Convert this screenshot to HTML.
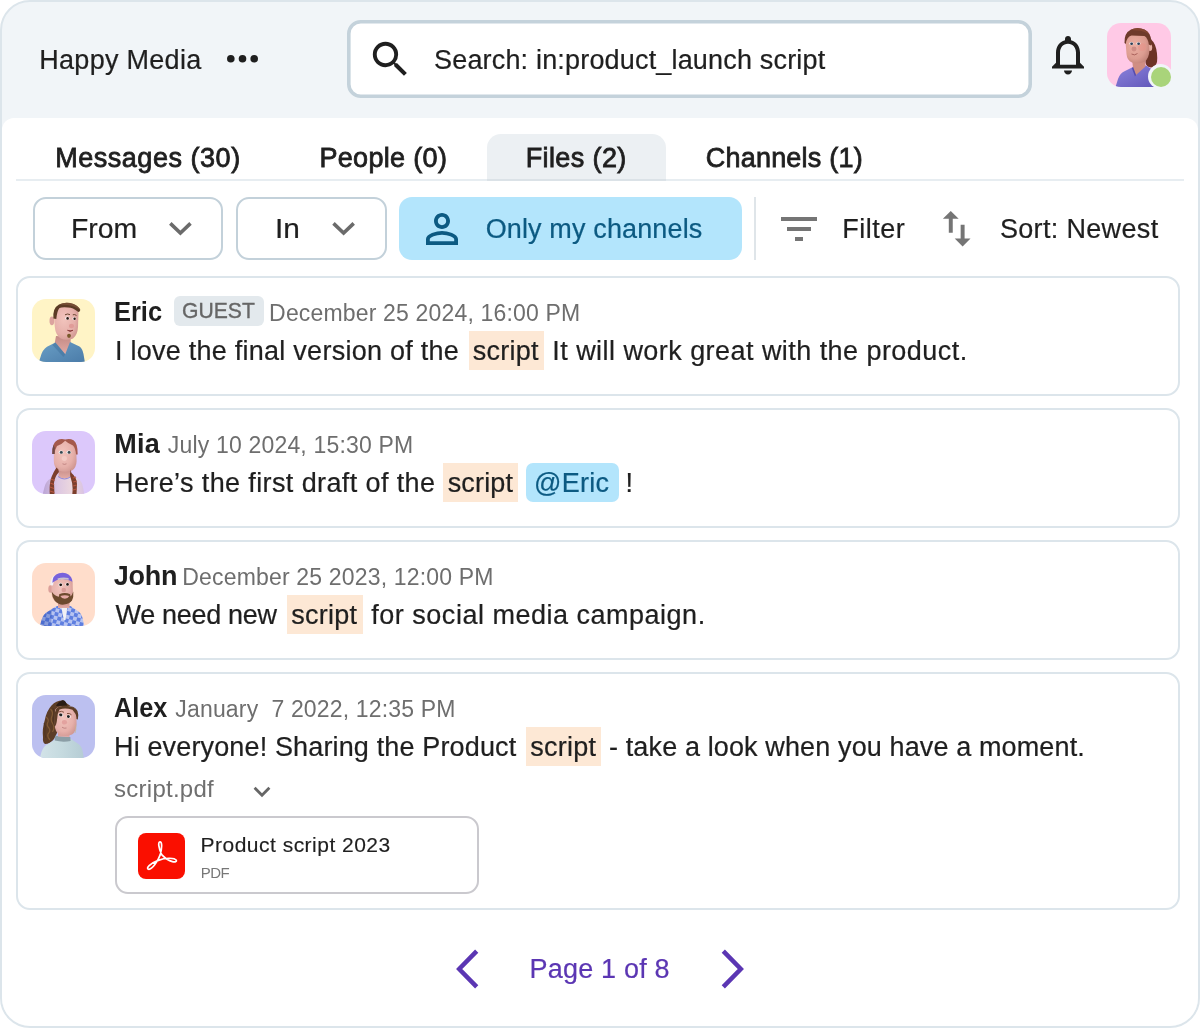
<!DOCTYPE html>
<html lang="en"><head><meta charset="utf-8"><title>Search results</title>
<style>
html,body{margin:0;padding:0;background:#fff;}
body{width:1200px;height:1028px;overflow:hidden;font-family:"Liberation Sans",sans-serif;position:relative;}
#frame{position:absolute;left:0;top:0;width:1200px;height:1028px;box-sizing:border-box;border:2px solid #dce5eb;border-radius:30px;background:#f1f5f8;overflow:hidden;}
#frame>*{position:absolute;}
/* all coordinates below are relative to the frame padding box (offset -2,-2 from page) */
#inner{left:-2px;top:-2px;width:1200px;height:1028px;will-change:transform;}
#inner>*{position:absolute;box-sizing:border-box;}
.t{position:absolute;line-height:1;white-space:pre;}
#panel{left:2px;top:118px;width:1196px;height:910px;background:#fff;border-radius:12px 12px 0 0;}
#search{left:347px;top:19.5px;width:685px;height:78.5px;border:3px solid #c5d3dc;border-radius:13px;background:#fff;}
.card{left:16px;width:1164px;border:2px solid #dce5eb;border-radius:14px;background:#fff;}
.btn{top:197px;height:63px;border:2px solid #c3d1da;border-radius:13px;background:#fff;}
.hl{background:#fde8d5;height:39px;}
.pill{background:#b3e5fc;border-radius:7px;}
.av{width:63px;height:63px;border-radius:14px;overflow:hidden;}
.av svg{display:block;}
svg{position:absolute;overflow:visible;}

</style></head>
<body>
<div id="frame"><div id="inner">
<svg width="0" height="0" style="left:0;top:0"><defs>
<radialGradient id="sk" cx=".4" cy=".4" r=".75"><stop offset="0" stop-color="#f2c4bd"/><stop offset=".6" stop-color="#e6b0aa"/><stop offset="1" stop-color="#c98f8a"/></radialGradient>
<radialGradient id="sk2" cx=".4" cy=".4" r=".75"><stop offset="0" stop-color="#ecb0a3"/><stop offset=".6" stop-color="#dc9c90"/><stop offset="1" stop-color="#b87a70"/></radialGradient>
<linearGradient id="nk" x1="0" y1="0" x2="0" y2="1"><stop offset="0" stop-color="#c48a85"/><stop offset="1" stop-color="#e3aca6"/></linearGradient>
</defs></svg>
<!-- header -->
<svg style="left:0;top:0" width="1200" height="118" viewBox="0 0 1200 118">
  <g fill="#1f1f1f"><circle cx="230.8" cy="58.8" r="3.8"/><circle cx="242.5" cy="58.8" r="3.8"/><circle cx="254.2" cy="58.8" r="3.8"/></g>
</svg>
<svg style="left:340px;top:14px" width="700" height="90" viewBox="340 14 700 90"><rect x="348.800" y="21.800" width="681.400" height="74.400" rx="12" fill="#fff" stroke="#c4d2db" stroke-width="3.600"/></svg>
<svg style="left:366.7px;top:35.7px" width="46.7" height="46.7" viewBox="0 0 24 24"><path fill="#1f1f1f" d="M15.5 14h-.79l-.28-.27A6.471 6.471 0 0 0 16 9.5 6.5 6.5 0 1 0 9.5 16c1.61 0 3.09-.59 4.23-1.57l.27.28v.79l5 4.99L20.49 19l-4.99-5zm-6 0C7.01 14 5 11.99 5 9.5S7.01 5 9.5 5 14 7.01 14 9.5 11.99 14 9.5 14z"/></svg>
<svg style="left:1044px;top:31.1px" width="48" height="47.5" viewBox="0 0 24 24" preserveAspectRatio="none"><path fill="#1f1f1f" d="M12 22c1.1 0 2-.9 2-2h-4c0 1.1.9 2 2 2zm6-6v-5c0-3.07-1.63-5.64-4.5-6.32V4c0-.83-.67-1.5-1.5-1.5s-1.5.67-1.5 1.5v.68C7.64 5.36 6 7.92 6 11v5l-2 2v1h16v-1l-2-2zm-2 1H8v-6c0-2.48 1.51-4.5 4-4.5s4 2.02 4 4.5v6z"/></svg>
<div class="av" style="left:1107px;top:23px;width:64px;height:64px;background:#ffc9e6"><svg width="64" height="64" viewBox="0 0 64 64">
<defs><linearGradient id="psh" x1="0" y1="0" x2="1" y2="1"><stop offset="0" stop-color="#8c83dc"/><stop offset="1" stop-color="#5f55b8"/></linearGradient></defs>
<path fill="#6c3326" d="M38 14 Q45 15 48 22 Q51 30 50 39 Q48.500 44.500 44 44.500 Q39.500 44 38.500 40 Z"/>
<path fill="url(#psh)" d="M8.500 64 L11 56 Q13 50 18 48 L26 44 L39 42.500 L46 47 Q49.500 50 50.500 56 L52 64 Z"/>
<path fill="#d08e83" d="M25 36 L38 36 L38.500 43.500 L29 52 L26 44.500 Z"/>
<path fill="#564cad" d="M26.200 44.200 L29 52 L28 53.500 L24.800 45 Z"/>
<ellipse cx="43" cy="24.500" rx="2.200" ry="3.600" fill="#e8b0a6"/>
<path fill="url(#sk2)" d="M18.300 16 Q20 10 29 10 Q40 10 42 16 L42.400 28 Q42 35.500 37.500 38.800 Q31 41.500 25 39.500 Q20 37.500 19.500 31 Z"/>
<path fill="#e98e84" d="M31 24 a4 4 0 1 0 8 0 a4 4 0 1 0 -8 0" opacity=".45"/>
<path fill="#6e3a2a" d="M17.500 20 Q17 10 24 6.500 Q30.500 3.500 37.500 6.500 Q43.500 9.500 44.500 18 L44 22.500 L41.800 21.500 Q41 15 37.500 13 Q30 12.500 24.500 12.500 Q19.500 14 18.800 21 Z"/>
<path fill="#8a4a35" d="M24 6.500 Q30.500 3.500 37.500 6.500 Q41 8.300 43 12 Q37 7.500 30 7.500 Q26 7.300 24 6.500 Z" opacity=".7"/>
<ellipse cx="24.400" cy="20.600" rx="2.100" ry="1.600" fill="#f1eaea"/><ellipse cx="31.400" cy="20.600" rx="2.100" ry="1.600" fill="#f1eaea"/>
<ellipse cx="24.600" cy="20.700" rx="1.400" ry="1.300" fill="#2d3f55"/><ellipse cx="31.600" cy="20.700" rx="1.400" ry="1.300" fill="#2d3f55"/>
<ellipse cx="27" cy="26" rx="2.500" ry="2.400" fill="#cf8c84"/>
<path d="M24.500 31 Q27.500 33 30.500 30.500" stroke="#a45a55" stroke-width=".9" fill="none"/>
</svg></div>
<div style="left:1148px;top:64px;width:25px;height:25px;border-radius:50%;background:#f1f5f8"></div>
<div style="left:1150.5px;top:66.5px;width:20px;height:20px;border-radius:50%;background:#a9d47a"></div>

<div id="panel"></div>
<!-- tabs -->
<div style="left:16px;top:179px;width:1168px;height:2px;background:#e7edf1"></div>
<div style="left:487px;top:134px;width:179px;height:47px;background:#ecf0f3;border-radius:14px 14px 0 0;border-bottom:2px solid #dbe2e7"></div>

<!-- filter row -->
<div class="btn" style="left:33px;width:190px"></div>
<div class="btn" style="left:236px;width:151px"></div>
<div class="pill" style="left:399px;top:197px;width:343px;height:62.5px;border-radius:13px"></div>
<div style="left:754px;top:197px;width:2px;height:63px;background:#dfe5e9"></div>
<svg style="left:0;top:190px" width="1200" height="80" viewBox="0 190 1200 80">
  <g fill="none" stroke="#6b6b6b" stroke-width="3.6">
    <polyline points="170.3,223.4 180.4,233 190.5,223.4"/>
    <polyline points="333.5,223.4 343.6,233 353.7,223.4"/>
  </g>
</svg>
<svg style="left:418px;top:205px" width="48" height="48" viewBox="0 0 24 24"><path fill="#0c5a82" d="M12 5.9c1.16 0 2.1.94 2.1 2.1s-.94 2.1-2.1 2.1S9.9 9.16 9.9 8s.94-2.1 2.1-2.1m0 9c2.97 0 6.100 1.46 6.100 2.1v1.1H5.9V17c0-.64 3.130-2.1 6.100-2.1M12 4C9.79 4 8 5.790 8 8s1.790 4 4 4 4-1.790 4-4-1.790-4-4-4zm0 9c-2.670 0-8 1.340-8 4v3h16v-3c0-2.660-5.330-4-8-4z"/></svg>
<svg style="left:774.9px;top:204.5px" width="48" height="48" viewBox="0 0 24 24"><path fill="#757575" d="M10 18h4v-2h-4v2zM3 6v2h18V6H3zm3 7h12v-2H6v2z"/></svg>
<svg style="left:932.9px;top:205.1px" width="47.4" height="47.4" viewBox="0 0 24 24"><path fill="#757575" d="M16 17.010V10h-2v7.010h-3L15 21l4-3.990h-3zM9 3L5 6.990h3V14h2V6.990h3L9 3z"/></svg>

<!-- cards -->
<div class="card" style="top:276px;height:120px"></div>
<div class="card" style="top:408px;height:120px"></div>
<div class="card" style="top:540px;height:120px"></div>
<div class="card" style="top:672px;height:238px"></div>

<div class="av" style="left:32px;top:299px;background:#fff4c6"><svg width="64" height="64" viewBox="0 0 64 64">
<defs><linearGradient id="esh" x1="0" y1="0" x2="1" y2="1"><stop offset="0" stop-color="#6a9fc6"/><stop offset="1" stop-color="#4a7ba8"/></linearGradient></defs>
<path fill="url(#nk)" d="M24 37 L38.600 38 L38.600 45 L33.200 56 L22.500 45 Z"/>
<path fill="url(#esh)" d="M6.500 64 L8.500 58 Q10.500 50.500 15 47.800 L23.400 43.600 L33.200 55.200 L38 42.900 L47.500 47.500 Q50.500 49.500 51.500 55 L53 64 Z"/>
<path fill="#3f6f9a" d="M23.400 43.600 L33.200 55.200 L31.500 58 L20.500 46 Z" opacity=".5"/>
<ellipse cx="19.900" cy="21.800" rx="2.400" ry="4.400" fill="#dca39e"/>
<path fill="url(#sk)" d="M22.500 12 Q23 7 30 6.500 L40 7 Q46.500 8 46.500 14 L46 28 Q45.500 36 41 39.500 Q37 41.500 31.500 40.500 Q25.500 39 23.500 32 Q21.800 24 22.500 12 Z"/>
<path fill="#5b3b25" d="M21.400 19.500 Q20.500 9 27 5.500 Q34 2.200 41.500 5 Q47 7.500 48.300 11 Q47.500 13.500 46 12.800 Q41 8.500 36 8.500 Q30 8 27.500 9 Q25 12 24.300 20 Z"/>
<path fill="#80563a" d="M27 5.500 Q34 2.200 41.500 5 Q47 7.500 48.300 11 Q42 6.500 35 6 Q30 5.800 27 5.500 Z" opacity=".7"/>
<ellipse cx="35.300" cy="19.300" rx="2.100" ry="1.700" fill="#f6eeee"/><ellipse cx="42.300" cy="19.700" rx="1.900" ry="1.600" fill="#f6eeee"/>
<circle cx="35.600" cy="19.400" r="1.300" fill="#2a1a14"/><circle cx="42.600" cy="19.800" r="1.200" fill="#2a1a14"/>
<path d="M33 15.800 Q35.500 14.300 38 15.600 M40.800 15.800 Q42.800 15 44.500 16.500" stroke="#6a4630" stroke-width="1" fill="none"/>
<ellipse cx="39.500" cy="27" rx="2.600" ry="2.200" fill="#e09c98"/>
<path d="M35.500 31.300 Q38 33.500 41 31.300 Q38.200 32.200 35.500 31.300Z" fill="#8a3b3b" stroke="#8a3b3b" stroke-width=".8"/>
<ellipse cx="37" cy="36.800" rx="1.900" ry="2.100" fill="#7a5a2c"/>
</svg></div>
<div class="av" style="left:32px;top:431px;background:#dcc8fb"><svg width="64" height="64" viewBox="0 0 64 64">
<defs><linearGradient id="msw" x1="0" y1="0" x2="1" y2="0"><stop offset="0" stop-color="#b9a3d4"/><stop offset=".35" stop-color="#dcc6e2"/><stop offset=".7" stop-color="#ecd8de"/><stop offset="1" stop-color="#d8c2e2"/></linearGradient></defs>
<path fill="url(#msw)" d="M10.500 64 L12.500 56 Q14 49.500 19 47.500 L26 43.500 L38.500 43.500 L46 47.800 Q50 50 51 56 L52.500 64 Z"/>
<path fill="url(#nk)" d="M26.500 37 L38.500 37 L38.500 45.500 Q32.500 49.500 26.500 45.500 Z"/>
<path d="M26 45.500 Q32.500 50.500 39 45.500" fill="none" stroke="#8f86d6" stroke-width="1"/>
<path fill="url(#sk)" d="M21.800 14 Q22.500 9.500 32 9 Q43 9 44.200 14.500 L44.600 30 Q44.300 37 40 39.500 Q33 42 26.500 39.500 Q22 37 21.800 30 Z"/>
<path fill="#a4594c" d="M20.300 23 Q19.800 12 25.500 9 Q29.500 7.200 33.200 8.600 Q37.500 7.200 41.500 9.200 Q45.800 12 45.700 23.500 L44 23.500 Q43.500 17 41 14.500 Q36 12.500 33.200 9.800 Q30.500 13 25 15 Q23 18 22.600 23 Z"/>
<path fill="#6b4a48" d="M20.300 23 Q20 18 21.500 14 L22.800 17 Q22.500 20 22.600 23 Z"/>
<path fill="#7c3f2c" d="M24.500 36.500 Q27 38 27 41 Q22.500 46 22 52 L22.500 64 L17.800 64 Q17 52 19.500 46 Q22 40 24.500 36.500 Z"/>
<path fill="#7c3f2c" d="M39.500 37 Q38.300 39 39.500 42 Q44.500 46 45 53 L44.500 64 L40.200 64 Q41.500 54 39 48 Q36.800 42.500 39.500 37 Z"/>
<path d="M19 48 l3.500 1.500 M18.300 52 l3.800 1.500 M18 56 l4 1.500 M18 60 l4.300 1.500 M40.800 47 l3.300 -1 M41.300 51 l3.400 -1 M41.200 55 l3.600 -1 M40.900 59 l3.700 -1" stroke="#b5563f" stroke-width="1.200"/>
<ellipse cx="29" cy="21.300" rx="2.300" ry="1.700" fill="#eef3f4"/><ellipse cx="36.800" cy="21.300" rx="2.300" ry="1.700" fill="#eef3f4"/>
<ellipse cx="29.300" cy="21.400" rx="1.500" ry="1.400" fill="#37474f"/><ellipse cx="37.100" cy="21.400" rx="1.500" ry="1.400" fill="#37474f"/>
<ellipse cx="32.300" cy="27.500" rx="2.600" ry="2.400" fill="#f3cbc4"/>
<path d="M30.500 32.800 Q32.500 34 34.500 32.800" stroke="#b87a78" stroke-width=".8" fill="none"/>
</svg></div>
<div class="av" style="left:32px;top:563px;background:#ffddcb"><svg width="64" height="64" viewBox="0 0 64 64">
<defs><pattern id="chk" width="7.600" height="7.600" patternUnits="userSpaceOnUse" patternTransform="rotate(14)"><rect width="7.600" height="7.600" fill="#b7c4f1"/><rect width="3.800" height="3.800" fill="#5f7fe0"/><rect x="3.800" y="3.800" width="3.800" height="3.800" fill="#5f7fe0"/></pattern></defs>
<path fill="url(#chk)" d="M7.500 64 L9.500 57 Q11.500 50.500 16 48.500 L24.500 43 L38.500 43 L46.500 48.500 Q50 51 51 57 L52.500 64 Z"/>
<path fill="#2f4fb0" opacity=".35" d="M7.500 64 L9.500 57 Q11.500 50.500 16 48.500 L20 46 L19 64 Z"/>
<path fill="url(#nk)" d="M26 38 L37.500 38 L37.500 45 L26 45 Z"/>
<path fill="#f1f1f4" d="M29.500 45 L35.200 45 L33.500 57 L31.800 57 Z"/>
<ellipse cx="18.300" cy="26" rx="2" ry="3.800" fill="#dca09a"/>
<path fill="url(#sk)" d="M19.500 19 Q21 14.500 30 14.500 Q39.500 14.500 40.600 19 L41 32 Q40.500 38.500 36 40.500 Q30 42 25 40 Q20 37 19.500 30 Z"/>
<path fill="#f4f0f6" d="M18.300 22 Q18.500 15 22 12.500 L24 14 Q21.500 17 21 22.500 Z"/>
<path fill="#7862dc" d="M20.300 19.800 Q20.500 12 27 10.200 Q33 9 36.500 11.500 Q40 14 40.500 18.800 Q35 15.500 29.500 16 Q24 16.500 20.300 19.800 Z"/>
<path fill="#c9c1cf" d="M25.500 15.500 Q30.500 13.800 36.500 15 L36.800 16.800 Q31 15.700 25.800 17.300 Z"/>
<path fill="#6d4a2e" d="M19.600 28.500 Q20 34 23 38 Q27 42.200 32 41.600 Q37.500 41 40 37.500 Q41.800 34 41.300 28.500 Q40.200 32 38.500 33.500 L38.200 31.200 Q33 28.600 27.200 31.200 L27 33.800 Q23 33.500 19.600 28.500 Z"/>
<path fill="#e7aaa6" d="M28.300 33 Q33 31.300 37.300 33 Q36 35.600 32.800 35.800 Q29.500 35.600 28.300 33 Z"/>
<circle cx="28.500" cy="21.700" r="2" fill="#f6f1f1"/><circle cx="35.300" cy="21.300" r="1.900" fill="#f6f1f1"/>
<circle cx="28.700" cy="21.800" r="1.400" fill="#1f1512"/><circle cx="35.500" cy="21.400" r="1.300" fill="#1f1512"/>
<ellipse cx="31.800" cy="27" rx="2.300" ry="2.300" fill="#d99c97"/>
</svg></div>
<div class="av" style="left:32px;top:695px;background:#bcc0f0"><svg width="64" height="64" viewBox="0 0 64 64">
<defs><linearGradient id="asw" x1="0" y1="0" x2="1" y2="0"><stop offset="0" stop-color="#d3e3e8"/><stop offset=".5" stop-color="#c5dadf"/><stop offset="1" stop-color="#b5ccd4"/></linearGradient></defs>
<path fill="#5c3d26" d="M30.500 5.500 Q24 5.500 19.500 10.500 Q14.500 16 12.800 25 Q10 34 11 42 Q10.500 47.500 13 49 Q18 49 22 44 L25 38 L25 20 Q27 12 35 11 Q42.500 10.500 45.500 16 Q47 20 45.800 24.500 L44 24 L43 14 Z"/>
<path fill="#2a1c14" d="M31 5 Q26 6.500 24 11 Q29 10.500 35 10.800 Q34.500 6 31 5 Z"/>
<path fill="url(#asw)" d="M7.500 64 L9.500 57 Q11.500 51 16 49 L23 44.800 L38.500 43.800 L46.500 49 Q50 51.500 50.800 57 L52 64 Z"/>
<path fill="#8b9ea6" d="M23 40.800 L38.300 42 L38.600 46 Q30.500 47.500 22.800 45.500 Z"/>
<path fill="url(#nk)" d="M26 36 L37.500 36 L37.500 42 L26 41.500 Z"/>
<path fill="url(#sk)" d="M23 15 Q25 10.800 33 11 Q43 11.500 44.300 17 L44.600 29 Q44.300 36.500 40 39.500 Q34 42 28 40 Q23 37.500 22.700 30 Z"/>
<path fill="#5c3d26" d="M22.500 32 Q21.500 20 24 14 Q27 10.500 34 10.700 Q41.500 11 44.500 15.500 Q46 19 45.300 23.500 Q43.500 18 40.500 14.800 Q33 12.500 27.500 14.500 Q25 19 25 25 Q24.500 30 22.500 32 Z"/>
<path d="M14 22 q3 2 2 5 q-2 3 1 6 q2 3 -1 6 q-1 3 2 6 M18.500 14 q3 3 1.500 7 q-2 4 1 8 q2 4 -.5 8" stroke="#8b6238" stroke-width="1.200" fill="none" opacity=".8"/>
<path d="M12 28 q2.500 3 1 7 q-1 4 1 8 M21 13 q2 5 .5 9 q-1 5 1 9" stroke="#4a3120" stroke-width="1" fill="none" opacity=".7"/>
<ellipse cx="29" cy="20" rx="2.400" ry="1.700" fill="#f3eeee" transform="rotate(12 29 20)"/><ellipse cx="36.700" cy="21.600" rx="2.200" ry="1.700" fill="#f3eeee" transform="rotate(12 36.700 21.600)"/>
<ellipse cx="28.700" cy="20" rx="1.700" ry="1.400" fill="#232323" transform="rotate(12 29 20)"/><ellipse cx="36.400" cy="21.600" rx="1.500" ry="1.400" fill="#232323" transform="rotate(12 36.700 21.600)"/>
<path d="M26.500 17 Q29.500 15.500 32 17.300 M35 18.500 Q37.500 17.800 39.500 19.800" stroke="#7a4a35" stroke-width=".9" fill="none"/>
<ellipse cx="32.500" cy="27.300" rx="2.600" ry="2.300" fill="#e3a29f"/>
<path d="M30 32.200 Q32 33.800 34.500 33" stroke="#b87a78" stroke-width=".8" fill="none"/>
<path d="M43.500 30 q1 4 -.5 8" stroke="#c9b58f" stroke-width=".7" fill="none"/>
</svg></div>

<div style="left:173.75px;top:295.5px;width:90px;height:30.5px;background:#e3e9ed;border-radius:6px"></div>

<div class="hl" style="left:469px;top:331px;width:74.6px"></div>
<div class="hl" style="left:443px;top:463px;width:75px"></div>
<div class="pill" style="left:526px;top:463px;width:92.5px;height:39px"></div>
<div class="hl" style="left:287px;top:595px;width:75.5px"></div>
<div class="hl" style="left:526px;top:727px;width:75px"></div>

<svg style="left:240px;top:780px" width="40" height="24" viewBox="240 780 40 24"><polyline fill="none" stroke="#666" stroke-width="2.8" points="254.6,787.8 262,795.2 269.4,787.8"/></svg>
<div style="left:115px;top:816px;width:364px;height:78px;border:2px solid #cac9ce;border-radius:13px;background:#fff"></div>
<div style="left:138px;top:833px;width:47px;height:45.5px;border-radius:8px;background:#fa0f00"></div>
<svg style="left:138px;top:832.8px" width="47.2" height="45.7" viewBox="0 0 47.2 45.7"><path fill="none" stroke="#fff" stroke-width="1.7" stroke-linejoin="round" d="M23.7 21.6 C20.5 15 19.8 8.8 22 8.8 C24.3 8.8 24 15 22.3 21.6 C20 28 14 37 10.5 36.3 C7.5 35.5 12 30.5 20.3 27.4 C27 24.7 36.5 24.4 38.3 27.3 C39.5 30 31.5 30 23.7 21.6 Z"/></svg>

<!-- pagination -->
<svg style="left:440px;top:940px" width="320" height="60" viewBox="440 940 320 60">
  <g fill="none" stroke="#5b36b3" stroke-width="4.5" stroke-linejoin="miter">
    <polyline points="476.7,951.2 459.2,969 476.7,986.8"/>
    <polyline points="723.3,951.2 740.8,969 723.3,986.8"/>
  </g>
</svg>

<span class="t" style="left:39.25px;top:47.00px;font-size:27px;color:#1f1f1f;letter-spacing:0.287px;-webkit-text-stroke:0.22px #1f1f1f;">Happy Media</span>
<span class="t" style="left:434.00px;top:47.00px;font-size:27px;color:#1f1f1f;letter-spacing:0.177px;-webkit-text-stroke:0.22px #1f1f1f;">Search: in:product_launch script</span>
<span class="t" style="left:55.18px;top:144.90px;font-size:27px;color:#1f1f1f;letter-spacing:0.533px;-webkit-text-stroke:0.8px #1f1f1f;">Messages (30)</span>
<span class="t" style="left:319.43px;top:144.90px;font-size:27px;color:#1f1f1f;letter-spacing:0.322px;-webkit-text-stroke:0.8px #1f1f1f;">People (0)</span>
<span class="t" style="left:525.68px;top:144.90px;font-size:27px;color:#1f1f1f;letter-spacing:0.393px;-webkit-text-stroke:0.8px #1f1f1f;">Files (2)</span>
<span class="t" style="left:705.75px;top:144.90px;font-size:27px;color:#1f1f1f;letter-spacing:0.212px;-webkit-text-stroke:0.8px #1f1f1f;">Channels (1)</span>
<span class="t" style="left:71.20px;top:216.00px;font-size:27px;color:#1f1f1f;transform:scaleX(1.0506);transform-origin:0 0;-webkit-text-stroke:0.22px #1f1f1f;">From</span>
<span class="t" style="left:275.09px;top:216.00px;font-size:27px;color:#1f1f1f;transform:scaleX(1.1053);transform-origin:0 0;-webkit-text-stroke:0.22px #1f1f1f;">In</span>
<span class="t" style="left:485.70px;top:216.00px;font-size:27px;color:#0c5a82;letter-spacing:0.133px;-webkit-text-stroke:0.22px #0c5a82;">Only my channels</span>
<span class="t" style="left:842.30px;top:216.00px;font-size:27px;color:#1f1f1f;letter-spacing:0.500px;-webkit-text-stroke:0.22px #1f1f1f;">Filter</span>
<span class="t" style="left:999.90px;top:216.00px;font-size:27px;color:#1f1f1f;letter-spacing:0.336px;-webkit-text-stroke:0.22px #1f1f1f;">Sort: Newest</span>
<span class="t" style="left:114.09px;top:299.00px;font-size:27px;font-weight:700;color:#1f1f1f;transform:scaleX(0.9423);transform-origin:0 0;">Eric</span>
<span class="t" style="left:181.57px;top:300.25px;font-size:22px;color:#666666;transform:scaleX(0.9610);transform-origin:0 0;-webkit-text-stroke:0.35px #666666;">GUEST</span>
<span class="t" style="left:269.11px;top:302.00px;font-size:23px;color:#6e6e6e;letter-spacing:0.167px;">December 25 2024, 16:00 PM</span>
<span class="t" style="left:115.00px;top:338.00px;font-size:27px;color:#1f1f1f;letter-spacing:0.251px;-webkit-text-stroke:0.22px #1f1f1f;">I love the final version of the</span>
<span class="t" style="left:472.82px;top:338.00px;font-size:27px;color:#1f1f1f;letter-spacing:0.236px;-webkit-text-stroke:0.22px #1f1f1f;">script</span>
<span class="t" style="left:552.30px;top:338.00px;font-size:27px;color:#1f1f1f;letter-spacing:0.449px;-webkit-text-stroke:0.22px #1f1f1f;">It will work great with the product.</span>
<span class="t" style="left:114.19px;top:431.00px;font-size:27px;font-weight:700;color:#1f1f1f;letter-spacing:0.312px;">Mia</span>
<span class="t" style="left:167.84px;top:434.00px;font-size:23px;color:#6e6e6e;letter-spacing:0.174px;">July 10 2024, 15:30 PM</span>
<span class="t" style="left:114.00px;top:470.00px;font-size:27px;color:#1f1f1f;letter-spacing:0.387px;-webkit-text-stroke:0.22px #1f1f1f;">Here’s the first draft of the</span>
<span class="t" style="left:447.72px;top:470.00px;font-size:27px;color:#1f1f1f;letter-spacing:0.156px;-webkit-text-stroke:0.22px #1f1f1f;">script</span>
<span class="t" style="left:534.00px;top:470.00px;font-size:27px;color:#0c5a82;letter-spacing:0.301px;-webkit-text-stroke:0.22px #0c5a82;">@Eric</span>
<span class="t" style="left:625.50px;top:470.00px;font-size:27px;color:#1f1f1f;letter-spacing:1.827px;-webkit-text-stroke:0.22px #1f1f1f;">!</span>
<span class="t" style="left:113.77px;top:563.00px;font-size:27px;font-weight:700;color:#1f1f1f;letter-spacing:-0.258px;">John</span>
<span class="t" style="left:182.31px;top:566.00px;font-size:23px;color:#6e6e6e;letter-spacing:0.175px;">December 25 2023, 12:00 PM</span>
<span class="t" style="left:115.50px;top:602.00px;font-size:27px;color:#1f1f1f;letter-spacing:-0.320px;-webkit-text-stroke:0.22px #1f1f1f;">We need new</span>
<span class="t" style="left:291.22px;top:602.00px;font-size:27px;color:#1f1f1f;letter-spacing:0.256px;-webkit-text-stroke:0.22px #1f1f1f;">script</span>
<span class="t" style="left:371.30px;top:602.00px;font-size:27px;color:#1f1f1f;letter-spacing:0.508px;-webkit-text-stroke:0.22px #1f1f1f;">for social media campaign.</span>
<span class="t" style="left:114.19px;top:695.00px;font-size:27px;font-weight:700;color:#1f1f1f;transform:scaleX(0.9353);transform-origin:0 0;">Alex</span>
<span class="t" style="left:175.34px;top:698.00px;font-size:23px;color:#6e6e6e;letter-spacing:0.162px;">January  7 2022, 12:35 PM</span>
<span class="t" style="left:114.00px;top:734.00px;font-size:27px;color:#1f1f1f;letter-spacing:0.145px;-webkit-text-stroke:0.22px #1f1f1f;">Hi everyone! Sharing the Product</span>
<span class="t" style="left:530.22px;top:734.00px;font-size:27px;color:#1f1f1f;letter-spacing:0.256px;-webkit-text-stroke:0.22px #1f1f1f;">script</span>
<span class="t" style="left:609.00px;top:734.00px;font-size:27px;color:#1f1f1f;letter-spacing:0.125px;-webkit-text-stroke:0.22px #1f1f1f;">- take a look when you have a moment.</span>
<span class="t" style="left:114.07px;top:777.00px;font-size:24px;color:#6f6f6f;letter-spacing:0.248px;">script.pdf</span>
<span class="t" style="left:200.59px;top:834.30px;font-size:21px;color:#1f1f1f;letter-spacing:0.483px;-webkit-text-stroke:0.15px #1f1f1f;">Product script 2023</span>
<span class="t" style="left:200.70px;top:865.20px;font-size:15px;color:#777777;letter-spacing:-0.505px;">PDF</span>
<span class="t" style="left:529.50px;top:956.30px;font-size:27px;color:#5b36b3;letter-spacing:0.200px;-webkit-text-stroke:0.2px #5b36b3;">Page 1 of 8</span>
</div></div>
</body></html>
